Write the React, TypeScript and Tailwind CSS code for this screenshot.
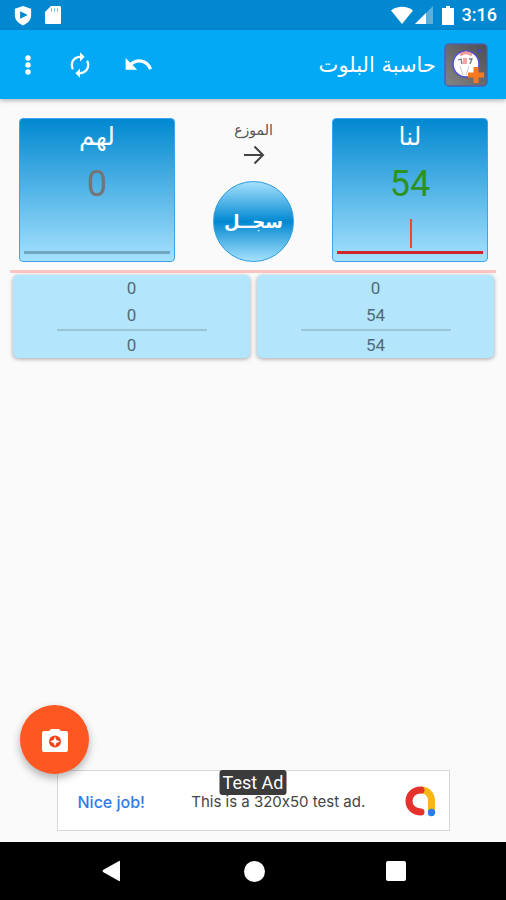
import React from "react";

const arabic = "font-['DejaVu_Sans',sans-serif]";

function StatusBar() {
  return (
    <div dir="ltr" className="flex h-[30px] items-center justify-between bg-[#0288d1] pr-[9px] pl-[13px] text-white">
      <div className="flex items-center gap-3">
        <svg viewBox="0 0 20 22" className="h-[21px] w-[20px]" aria-hidden="true">
          <path d="M10 1 18.500 4v7c0 4.500-3.500 8-8.500 10.500C5 19 1.500 15.500 1.500 11V4z" fill="currentColor" />
          <path d="M7 6.500v8l8-4z" fill="#0288d1" />
        </svg>
        <svg viewBox="0 0 16 20" className="h-[20px] w-[16px]" aria-hidden="true">
          <path d="M6 1h8.500c1 0 1.500.5 1.500 1.500v15c0 1-.5 1.500-1.500 1.500h-13C.5 19 0 18.500 0 17.500V7z" fill="currentColor" />
          <path d="M6.500 3.500v3M9.500 3.500v3M12.500 3.500v3" stroke="#62b4e0" strokeWidth="1" />
        </svg>
      </div>
      <div className="flex items-center">
        <svg viewBox="0 0 22 18" className="h-[18px] w-[22px]" aria-hidden="true">
          <path d="M0 4.500C6-.5 16-.5 22 4.500L11 18z" fill="currentColor" />
        </svg>
        <svg viewBox="0 0 18 18" className="ml-[2px] h-[18px] w-[18px]" aria-hidden="true">
          <path d="M18 0v18H0z" fill="currentColor" opacity=".35" />
          <path d="M11 7v11H0z" fill="currentColor" />
        </svg>
        <svg viewBox="0 0 12 19" className="ml-[9px] h-[19px] w-[12px]" aria-hidden="true">
          <path d="M4 0h4v2h4v17H0V2h4z" fill="currentColor" />
        </svg>
        <span className="ml-2 font-['Roboto',sans-serif] text-[18px] leading-[30px] font-medium">3:16</span>
      </div>
    </div>
  );
}

function AppLogo() {
  return (
    <svg viewBox="0 0 44 44" className="h-[44px] w-[44px]" aria-hidden="true">
      <defs>
        <linearGradient id="tile" x1="0" y1="1" x2="1" y2="0">
          <stop offset="0" stopColor="#858585" />
          <stop offset="1" stopColor="#4e4e52" />
        </linearGradient>
      </defs>
      <rect x="1" y="1" width="42" height="42" rx="4" fill="url(#tile)" stroke="#4e5fae" strokeWidth="1.500" />
      <circle cx="22" cy="21" r="13" fill="#fff" stroke="#4d50cf" strokeWidth="1.500" />
      <path d="M16 12c4-3 8-3 12 0" fill="none" stroke="#ef9a95" strokeWidth="3" />
      <path d="M14 17l3-1 1 5M25 16h3l-2 5" fill="none" stroke="#777" strokeWidth="1.300" />
      <path d="M19 15h4v6h-4z" fill="#f2a5a5" />
      <path d="M16 23l3 9M25 23l-3 9" stroke="#ccc" strokeWidth="1" />
      <circle cx="35.500" cy="8" r="2" fill="#4047c4" />
      <path d="M32 24v16M24 32h16" stroke="#f57a1f" strokeWidth="5" />
    </svg>
  );
}

function AppBar() {
  return (
    <header className="z-10 flex h-[69px] items-center justify-between bg-[#03a9f4] pr-[18px] pl-[14px] text-white shadow-[0_2px_4px_rgba(0,0,0,0.25)]">
      <div className="flex items-center gap-2">
        <AppLogo />
        <h1 className={`${arabic} text-[21px] leading-8`}>حاسبة البلوت</h1>
      </div>
      <div className="flex items-center">
        <button type="button" aria-label="تراجع" className="ml-[30px] flex h-11 w-7 items-center justify-center">
          <svg viewBox="1.500 7 21 10" className="h-[13px] w-[27px]" fill="currentColor" aria-hidden="true">
            <path d="M12.500 8c-2.650 0-5.050.99-6.900 2.600L2 7v9h9l-3.620-3.620c1.390-1.160 3.160-1.880 5.120-1.880 3.540 0 6.550 2.310 7.600 5.500l2.370-.78C21.080 11.030 17.150 8 12.500 8z" />
          </svg>
        </button>
        <button type="button" aria-label="إعادة" className="ml-6 flex h-11 w-7 items-center justify-center">
          <svg viewBox="0 0 24 24" className="h-[28px] w-[28px]" fill="currentColor" aria-hidden="true">
            <path d="M12 6v3l4-4-4-4v3c-4.420 0-8 3.580-8 8 0 1.570.46 3.030 1.240 4.260L6.700 14.800c-.45-.83-.7-1.790-.7-2.800 0-3.310 2.690-6 6-6zm6.760 1.740L17.300 9.200c.44.84.7 1.790.7 2.800 0 3.310-2.690 6-6 6v-3l-4 4 4 4v-3c4.420 0 8-3.580 8-8 0-1.570-.46-3.030-1.240-4.260z" />
          </svg>
        </button>
        <button type="button" aria-label="المزيد" className="flex h-11 w-7 items-center justify-center">
          <svg viewBox="0 0 6 22" className="h-[22px] w-[6px]" fill="currentColor" aria-hidden="true">
            <circle cx="3" cy="4" r="2.700" />
            <circle cx="3" cy="11" r="2.700" />
            <circle cx="3" cy="18" r="2.700" />
          </svg>
        </button>
      </div>
    </header>
  );
}

type ScoreProps = { id: string; title: string; total: number; active?: boolean };

function ScoreCard({ id, title, total, active }: ScoreProps) {
  return (
    <section className="flex h-[144px] w-[156px] flex-col items-center rounded-[4px] border border-[#3aa5ee] bg-linear-to-b/srgb from-[#0288d1] to-[#a5e1fd] px-1">
      <label htmlFor={id} className={`${arabic} h-10 text-[25px] leading-9 text-white`}>
        {title}
      </label>
      <output className={`font-['Roboto',sans-serif] text-[36px] leading-[50px] ${active ? "text-[#2e9220]" : "text-[#757575]"}`}>
        {total}
      </output>
      <div className="relative w-full">
        <input
          id={id}
          inputMode="numeric"
          className={`block h-[45px] w-full border-b-[3px] bg-transparent text-center font-['Roboto',sans-serif] text-2xl outline-none ${active ? "border-[#d3262b]" : "border-[#6fa5c1]"}`}
        />
        {active && <span className="absolute bottom-[6px] left-1/2 h-[29px] w-[2px] bg-[#e8492f]" />}
      </div>
    </section>
  );
}

function RoundPanel({ rows, sum }: { rows: number[]; sum: number }) {
  return (
    <section className="flex h-[83px] flex-1 flex-col items-center rounded-[5px] bg-[#b3e5fc] font-['Roboto',sans-serif] text-[17px] leading-[27px] text-[#4d6c7b] shadow-[0_1px_4px_rgba(0,0,0,0.35)]">
      {rows.map((value, index) => (
        <span key={index}>{value}</span>
      ))}
      <hr className="mb-px w-[150px] border-t-2 border-[#98c5d8]" />
      <span>{sum}</span>
    </section>
  );
}

function AdBanner() {
  return (
    <a
      href="#ad"
      dir="ltr"
      className="relative mx-auto mb-[11px] flex h-[61px] w-[393px] max-w-full items-center justify-between border border-[#d5d9db] bg-white pr-[13px] pl-5 font-['Inter',sans-serif] text-[15px] [font-feature-settings:'calt'_0]"
    >
      <span className="pt-[3px] text-[16px] font-medium text-[#2f7be8]">Nice job!</span>
      <span className="ml-7 pt-[3px] text-[#444]">This is a 320x50 test ad.</span>
      <svg viewBox="0 0 32 32" className="ml-5 h-8 w-8" fill="none" aria-hidden="true">
        <path d="M17 5c6.500 0 10.500 4.500 10.500 11v11" stroke="#fbb516" strokeWidth="7" />
        <path d="M17 5C10 5 5 9.500 5 16s5 11 12 11" stroke="#e5322d" strokeWidth="7" strokeLinecap="round" />
        <circle cx="27.500" cy="27.500" r="3.700" fill="#2b7de9" />
      </svg>
      <span className="absolute -top-px left-1/2 flex h-[25px] w-[67px] -translate-x-1/2 items-center justify-center rounded-[3px] bg-[#3b3b3b] font-['Roboto',sans-serif] text-[18px] whitespace-nowrap text-white">
        Test Ad
      </span>
    </a>
  );
}

function NavigationBar() {
  return (
    <nav dir="ltr" className="flex h-[58px] items-center justify-center gap-[121px] bg-black text-white">
      <button type="button" aria-label="Back" className="h-[22px] w-[22px]">
        <svg viewBox="0 0 22 22" fill="currentColor">
          <path d="M19 1.500v19q0 1-1 .5L2 12q-1-1 0-2L18 1q1-.5 1 .5z" />
        </svg>
      </button>
      <button type="button" aria-label="Home" className="h-[21px] w-[21px] rounded-full bg-white" />
      <button type="button" aria-label="Recents" className="h-[20px] w-[20px] rounded-[2px] bg-white" />
    </nav>
  );
}

export default function App() {
  return (
    <div dir="rtl" className="flex min-h-screen flex-col bg-[#fafafa]">
      <StatusBar />
      <AppBar />
      <main className="relative flex flex-1 flex-col">
        <div className="flex justify-between pt-[19px] pr-[18px] pl-[19px]">
          <ScoreCard id="ours" title="لنا" total={54} active />
          <div className="flex flex-col items-center">
            <span className={`${arabic} text-[14px] leading-6 text-[#555]`}>الموزع</span>
            <button type="button" aria-label="تغيير الموزع" className="mt-[2px] h-[22px] w-[22px]">
              <svg viewBox="0 0 22 22" fill="none" stroke="#444" strokeWidth="2" aria-hidden="true">
                <path d="M1 11h19M11.500 2.500 20 11l-8.500 8.500" />
              </svg>
            </button>
            <button
              type="button"
              className={`${arabic} mt-auto h-[81px] w-[81px] rounded-full border border-[#2b9be0] bg-linear-to-b/srgb from-[#a5e1fd] via-[#0288d1] to-[#a5e1fd] text-[18px] font-bold text-white`}
            >
              سجــل
            </button>
          </div>
          <ScoreCard id="theirs" title="لهم" total={0} />
        </div>
        <hr className="mx-[10px] mt-[8px] border-t-[3px] border-[#fac6c1]" />
        <div className="mt-[2px] flex gap-[7px] pr-3 pl-[13px]">
          <RoundPanel rows={[0, 54]} sum={54} />
          <RoundPanel rows={[0, 0]} sum={0} />
        </div>
        <div className="mt-auto">
          <AdBanner />
        </div>
        <button
          type="button"
          aria-label="تصوير"
          className="absolute bottom-[68px] left-5 flex h-[69px] w-[69px] items-center justify-center rounded-full bg-[#ff5722] shadow-[0_4px_8px_rgba(0,0,0,0.3)]"
        >
          <svg viewBox="0 0 26 24" className="h-[24px] w-[26px]" aria-hidden="true">
            <path d="M9 1h8l2 2h5q2 0 2 2v17q0 2-2 2H2q-2 0-2-2V5q0-2 2-2h5z" fill="#fff" />
            <circle cx="13" cy="13.500" r="6" fill="#f4431c" />
            <path d="m13 8.500 1.400 3.600 3.600 1.400-3.600 1.400-1.400 3.600-1.400-3.600L8 13.500l3.600-1.400z" fill="#fff" />
          </svg>
        </button>
      </main>
      <NavigationBar />
    </div>
  );
}
